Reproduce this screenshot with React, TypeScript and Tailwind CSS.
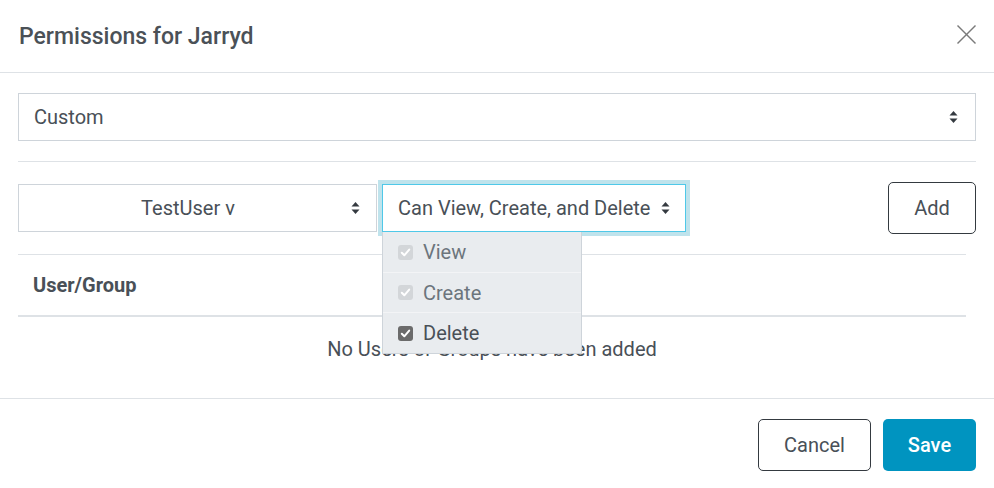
import React from "react";

function UpDown() {
  return (
    <svg width="9" height="14" viewBox="0 0 9 14" className="shrink-0">
      <polygon points="0.5,5.5 4.5,1 8.5,5.5" fill="#343a40" />
      <polygon points="0.5,8.5 4.5,13 8.5,8.5" fill="#343a40" />
    </svg>
  );
}

function Check({ dark }: { dark: boolean }) {
  return (
    <span
      className={
        "w-[15px] h-[15px] rounded-[3px] flex items-center justify-center shrink-0 " +
        (dark ? "bg-[#6b6b6b]" : "bg-[#d3d6d9]")
      }
    >
      <svg width="11" height="11" viewBox="0 0 11 11">
        <polyline
          points="1.8,5.8 4.3,8.3 9.2,2.6"
          fill="none"
          stroke="#ffffff"
          strokeWidth="2"
          strokeLinecap="round"
          strokeLinejoin="round"
        />
      </svg>
    </span>
  );
}

export default function App() {
  return (
    <div className="w-[994px] h-[488px] bg-white font-['Roboto',sans-serif] text-[#495057] relative overflow-hidden">
      <header className="h-[73px] border-b border-[#dee2e6] flex items-center justify-between pl-[19px] pr-[17px]">
        <h5 className="text-[23px] font-medium text-[#4b5157] leading-none">Permissions for Jarryd</h5>
        <svg width="21" height="21" viewBox="0 0 21 21" className="mt-[-4px]">
          <line x1="1.5" y1="1.5" x2="19.5" y2="19.5" stroke="#7a7a7a" strokeWidth="1.4" />
          <line x1="19.5" y1="1.5" x2="1.5" y2="19.5" stroke="#7a7a7a" strokeWidth="1.4" />
        </svg>
      </header>

      <div className="px-[18px] pt-[20px]">
        <div className="h-[48px] border border-[#ced4da] flex items-center justify-between pl-[15px] pr-[17px] text-[20px]">
          <span>Custom</span>
          <UpDown />
        </div>

        <div className="mt-[20px] border-t border-[#dee2e6]" />

        <div className="mt-[20px] h-[52px] flex items-center">
          <div className="w-[359px] h-[48px] border border-[#ced4da] flex items-center pr-[16px] text-[20px]">
            <span className="flex-1 text-center pl-[6px]">TestUser v</span>
            <UpDown />
          </div>
          <div className="relative ml-[5px]">
            <div className="w-[304px] h-[48px] border border-[#4fc8e8] ring-4 ring-[#bfe3ec] flex items-center justify-between pl-[15px] pr-[15px] text-[20px] bg-white">
              <span>Can View, Create, and Delete</span>
              <UpDown />
            </div>
            <div className="absolute left-0 top-[48px] w-[200px] bg-[#e9ecef] border border-[#ced4da] border-t-0 z-10 text-[20px]">
              <div className="h-[41px] flex items-center pl-[15px] gap-[10px] border-b border-[#f3f4f6] text-[#6c757d]">
                <Check dark={false} />
                <span>View</span>
              </div>
              <div className="h-[40px] flex items-center pl-[15px] gap-[10px] border-b border-[#f3f4f6] text-[#6c757d]">
                <Check dark={false} />
                <span>Create</span>
              </div>
              <div className="h-[40px] flex items-center pl-[15px] gap-[10px] text-[#495057]">
                <Check dark={true} />
                <span>Delete</span>
              </div>
            </div>
          </div>
          <div className="flex-1" />
          <button className="w-[88px] h-[52px] border border-[#343a40] rounded-[5px] text-[20px] text-[#495057] bg-white">
            Add
          </button>
        </div>

        <div className="mt-[20px] w-[948px] border-t border-[#dee2e6]">
          <div className="h-[62px] flex items-center pl-[15px] border-b-2 border-[#dee2e6] text-[20px] font-bold text-[#495057]">
            User/Group
          </div>
          <div className="h-[64px] flex items-center justify-center text-[20px] text-[#495057]">
            No Users or Groups have been added
          </div>
        </div>
      </div>

      <footer className="absolute left-0 right-0 bottom-0 h-[90px] border-t border-[#dee2e6] flex items-center justify-end gap-[12px] pr-[18px] pt-[2px]">
        <button className="w-[113px] h-[52px] border border-[#343a40] rounded-[5px] text-[20px] text-[#495057] bg-white">
          Cancel
        </button>
        <button className="w-[93px] h-[52px] rounded-[5px] text-[20px] font-medium text-white bg-[#0094c0]">
          Save
        </button>
      </footer>
    </div>
  );
}
